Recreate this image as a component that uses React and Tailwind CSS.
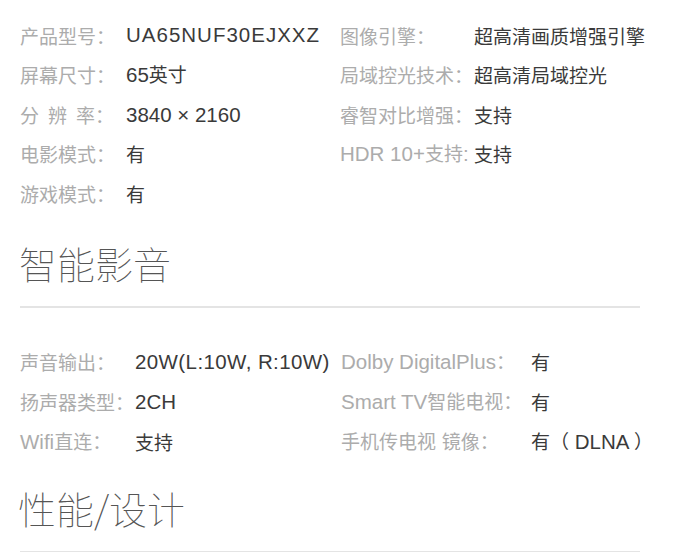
import React from "react";

const cjk = '"Noto Sans CJK SC", sans-serif';

// split text into latin / cjk runs so the latin part gets its own size
function Mixed({ text, latin = "" }) {
  const parts = text.split(/([\u0020-\u024F\u00D7]+)/).filter(Boolean);
  return (
    <>
      {parts.map((p, i) =>
        /^[\u0020-\u024F\u00D7]+$/.test(p) ? (
          <span key={i} className={`font-['Liberation_Sans'] text-[20.5px] whitespace-pre ${latin}`}>
            {p}
          </span>
        ) : (
          <span key={i} className="text-[19px]">
            {p}
          </span>
        )
      )}
    </>
  );
}

const specs = [
  ["产品型号：", "UA65NUF30EJXXZ", "图像引擎：", "超高清画质增强引擎", "tracking-[1px]"],
  ["屏幕尺寸：", "65英寸", "局域控光技术：", "超高清局域控光"],
  ["分辨率：", "3840 × 2160", "睿智对比增强：", "支持"],
  ["电影模式：", "有", "HDR 10+支持:", "支持"],
  ["游戏模式：", "有", "", ""],
];

const audio = [
  ["声音输出：", "20W(L:10W, R:10W)", "Dolby DigitalPlus：", "有", "tracking-[0.4px]"],
  ["扬声器类型：", "2CH", "Smart TV智能电视：", "有"],
  ["Wifi直连：", "支持", "手机传电视 镜像：", "有（ DLNA ）"],
];

function Label({ text }) {
  if (text === "分辨率：") {
    return (
      <span className="text-[19px]">
        <span className="tracking-[9px]">分辨</span>率：
      </span>
    );
  }
  return <Mixed text={text} />;
}

function Row({ row, widths, h }) {
  const [l1, v1, l2, v2, latin] = row;
  return (
    <div className={`flex items-center ${h} whitespace-nowrap`}>
      <div className={`${widths[0]} shrink-0 text-[#acacac]`}>
        <Label text={l1} />
      </div>
      <div className={`${widths[1]} shrink-0 text-[#3a3a3a]`}>
        <Mixed text={v1} latin={latin} />
      </div>
      <div className={`${widths[2]} shrink-0 text-[#acacac]`}>
        <Mixed text={l2} />
      </div>
      <div className="text-[#3a3a3a]">
        <Mixed text={v2} />
      </div>
    </div>
  );
}

export default function App() {
  return (
    <div
      className="w-[693px] h-[552px] bg-white overflow-hidden pl-[20px] pt-[16px]"
      style={{ fontFamily: cjk }}
    >
      <div className="w-[620px]">
        <div>
          {specs.map((r, i) => (
            <Row key={i} row={r} h="h-[39.6px]" widths={["w-[106px]", "w-[214px]", "min-w-[134px]"]} />
          ))}
        </div>

        <h2 className="mt-[30px] text-[38px] leading-[38px] font-thin text-[#555] -ml-[1px]">
          智能影音
        </h2>
        <div className="mt-[24px] h-[2px] bg-[#e4e4e4]" />

        <div className="mt-[34px]">
          {audio.map((r, i) => (
            <Row key={i} row={r} h="h-[40px]" widths={["w-[115px]", "w-[206px]", "min-w-[190px]"]} />
          ))}
        </div>

        <h2 className="mt-[27px] text-[38px] leading-[38px] font-thin text-[#555] -ml-[2px]">
          性能/设计
        </h2>
        <div className="mt-[24px] h-[2px] bg-[#e4e4e4]" />
      </div>
    </div>
  );
}
